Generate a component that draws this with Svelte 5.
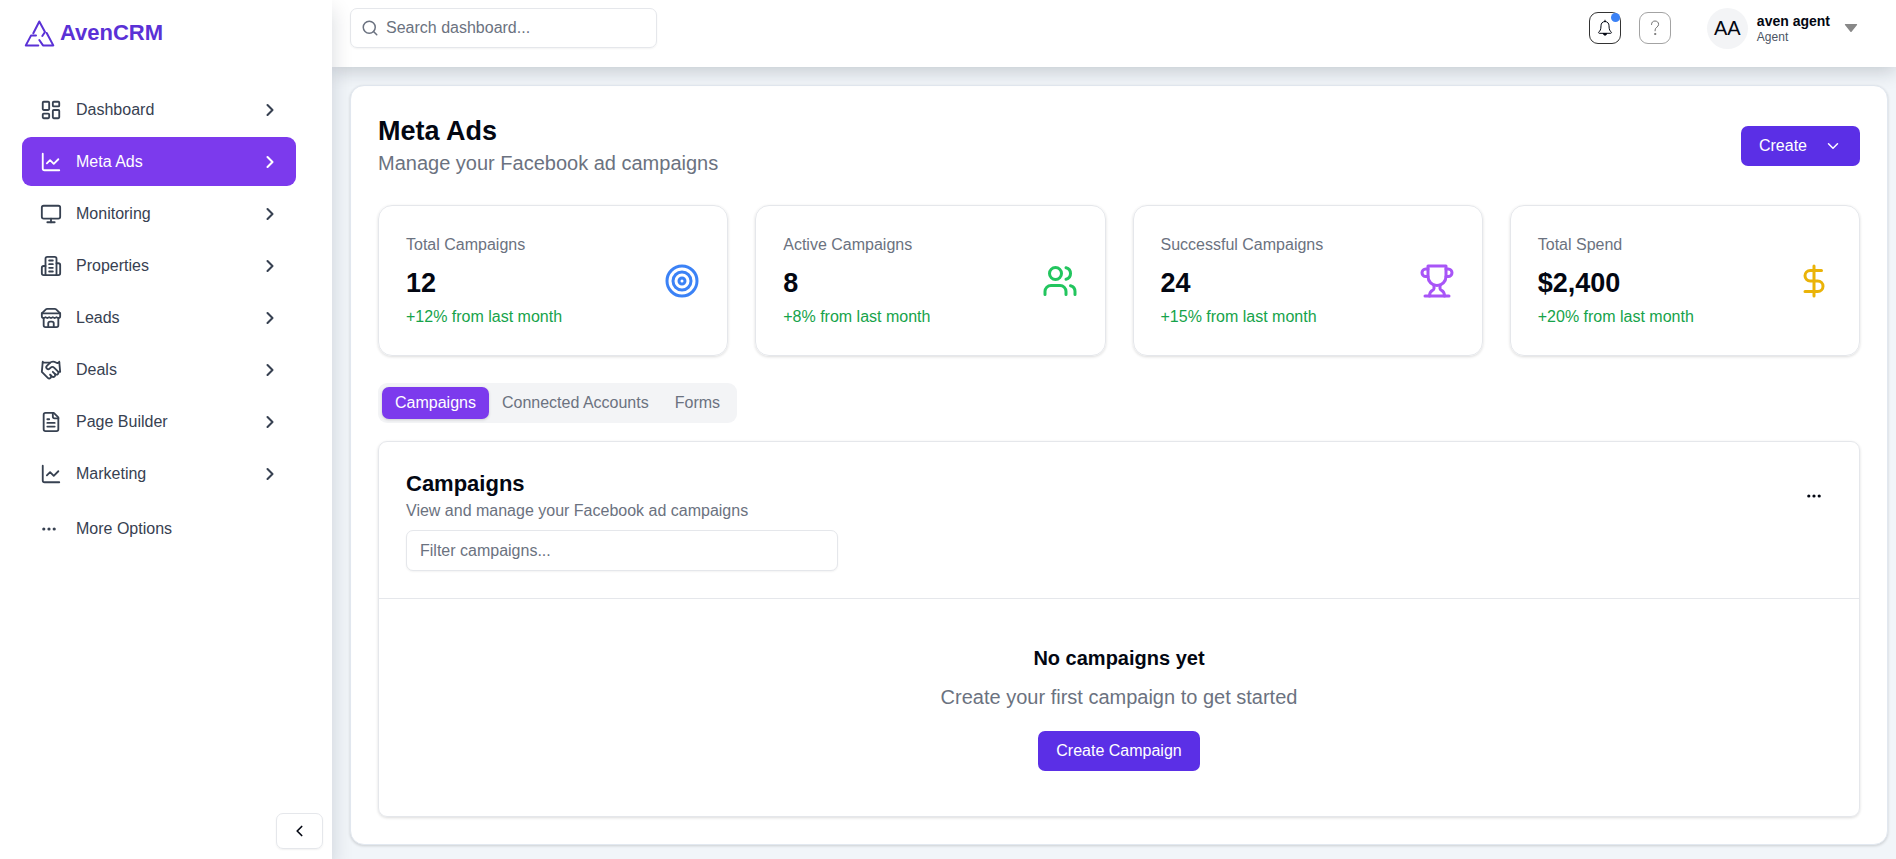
<script>
  const icons = {
    dashboard:
      '<rect width="7" height="9" x="3" y="3" rx="1"/><rect width="7" height="5" x="14" y="3" rx="1"/><rect width="7" height="9" x="14" y="12" rx="1"/><rect width="7" height="5" x="3" y="16" rx="1"/>',
    chart: '<path d="M3 3v16a2 2 0 0 0 2 2h16"/><path d="m7.5 13.5 3.5-3.5 4 4 5-5"/>',
    monitor:
      '<rect width="20" height="14" x="2" y="3" rx="2"/><path d="M8 21h8"/><path d="M12 17v4"/>',
    building:
      '<path d="M6 22V4a2 2 0 0 1 2-2h8a2 2 0 0 1 2 2v18Z"/><path d="M6 12H4a2 2 0 0 0-2 2v6a2 2 0 0 0 2 2h2"/><path d="M18 9h2a2 2 0 0 1 2 2v9a2 2 0 0 1-2 2h-2"/><path d="M10 6h4"/><path d="M10 10h4"/><path d="M10 14h4"/><path d="M10 18h4"/>',
    store:
      '<path d="m2 7 4.41-4.41A2 2 0 0 1 7.83 2h8.34a2 2 0 0 1 1.42.59L22 7"/><path d="M4 12v8a2 2 0 0 0 2 2h12a2 2 0 0 0 2-2v-8"/><path d="M15 22v-4a2 2 0 0 0-2-2h-2a2 2 0 0 0-2 2v4"/><path d="M2 7h20"/><path d="M22 7v3a2 2 0 0 1-2 2a2.7 2.7 0 0 1-1.59-.63.7.7 0 0 0-.82 0A2.7 2.7 0 0 1 16 12a2.7 2.7 0 0 1-1.59-.63.7.7 0 0 0-.82 0A2.7 2.7 0 0 1 12 12a2.7 2.7 0 0 1-1.59-.63.7.7 0 0 0-.82 0A2.7 2.7 0 0 1 8 12a2.7 2.7 0 0 1-1.59-.63.7.7 0 0 0-.82 0A2.7 2.7 0 0 1 4 12a2 2 0 0 1-2-2V7"/>',
    handshake:
      '<path d="m11 17 2 2a1 1 0 1 0 3-3"/><path d="m14 14 2.5 2.5a1 1 0 1 0 3-3l-3.88-3.88a3 3 0 0 0-4.24 0l-.88.88a1 1 0 1 1-3-3l2.81-2.81a5.79 5.79 0 0 1 7.06-.87l.47.28a2 2 0 0 0 1.42.25L21 4"/><path d="m21 3 1 11h-2"/><path d="M3 3 2 14l6.5 6.5a1 1 0 1 0 3-3"/><path d="M3 4h8"/>',
    file: '<path d="M15 2H6a2 2 0 0 0-2 2v16a2 2 0 0 0 2 2h12a2 2 0 0 0 2-2V7Z"/><path d="M14 2v4a2 2 0 0 0 2 2h4"/><path d="M10 9H8"/><path d="M16 13H8"/><path d="M16 17H8"/>',
    target:
      '<circle cx="12" cy="12" r="10"/><circle cx="12" cy="12" r="6"/><circle cx="12" cy="12" r="2"/>',
    users:
      '<path d="M16 21v-2a4 4 0 0 0-4-4H6a4 4 0 0 0-4 4v2"/><circle cx="9" cy="7" r="4"/><path d="M22 21v-2a4 4 0 0 0-3-3.87"/><path d="M16 3.13a4 4 0 0 1 0 7.75"/>',
    trophy:
      '<path d="M6 9H4.5a2.5 2.5 0 0 1 0-5H6"/><path d="M18 9h1.5a2.5 2.5 0 0 0 0-5H18"/><path d="M4 22h16"/><path d="M10 14.66V17c0 .55-.47.98-.97 1.21C7.85 18.75 7 20.24 7 22"/><path d="M14 14.66V17c0 .55.47.98.97 1.21C16.15 18.75 17 20.24 17 22"/><path d="M18 2H6v7a6 6 0 0 0 12 0V2Z"/>',
    dollar: '<path d="M12 2v20"/><path d="M17 5H9.5a3.5 3.5 0 0 0 0 7h5a3.5 3.5 0 0 1 0 7H6"/>',
  };

  const nav = [
    { label: 'Dashboard', icon: 'dashboard' },
    { label: 'Meta Ads', icon: 'chart', active: true },
    { label: 'Monitoring', icon: 'monitor' },
    { label: 'Properties', icon: 'building' },
    { label: 'Leads', icon: 'store' },
    { label: 'Deals', icon: 'handshake' },
    { label: 'Page Builder', icon: 'file' },
    { label: 'Marketing', icon: 'chart' },
  ];

  const stats = [
    { label: 'Total Campaigns', value: '12', change: '+12% from last month', icon: 'target', tone: 'blue' },
    { label: 'Active Campaigns', value: '8', change: '+8% from last month', icon: 'users', tone: 'green' },
    { label: 'Successful Campaigns', value: '24', change: '+15% from last month', icon: 'trophy', tone: 'purple' },
    { label: 'Total Spend', value: '$2,400', change: '+20% from last month', icon: 'dollar', tone: 'yellow' },
  ];

  const tabs = ['Campaigns', 'Connected Accounts', 'Forms'];
  let tab = $state('Campaigns');
</script>

{#snippet icon(name)}
  <svg class="icon" viewBox="0 0 24 24" aria-hidden="true">{@html icons[name]}</svg>
{/snippet}

{#snippet dots()}
  <svg class="dots" viewBox="0 0 16 16" aria-hidden="true">
    <circle cx="2.8" cy="8" r="1.6" /><circle cx="8" cy="8" r="1.6" /><circle cx="13.2" cy="8" r="1.6" />
  </svg>
{/snippet}

<div class="app">
  <aside>
    <a class="brand" href="#home">
      <svg viewBox="24 18 31 28" aria-hidden="true">
        <path d="M33.300 32.300 39.300 20.500 45 31 42.300 35" />
        <path d="M38.300 44.400H25.800L31 34.600H36" />
        <path d="M46.700 32 53.300 44.400H43L39.300 39" />
      </svg>
      AvenCRM
    </a>
    <nav>
      {#each nav as item}
        <a href="#{item.icon}" class:active={item.active} aria-current={item.active ? 'page' : undefined}>
          {@render icon(item.icon)}
          <span>{item.label}</span>
          <svg class="chevron" viewBox="0 0 24 24" aria-hidden="true"><path d="m9 18 6-6-6-6" /></svg>
        </a>
      {/each}
      <button class="more">{@render dots()}<span>More Options</span></button>
    </nav>
    <button class="collapse" aria-label="Collapse sidebar">
      <svg viewBox="0 0 16 16" aria-hidden="true"><path d="M9.500 4 5.500 8l4 4" /></svg>
    </button>
  </aside>

  <div class="page">
    <header>
      <label class="search">
        <svg viewBox="0 0 24 24" aria-hidden="true"><circle cx="11" cy="11" r="8" /><path d="m21 21-4.3-4.3" /></svg>
        <input type="text" placeholder="Search dashboard..." aria-label="Search dashboard" />
      </label>
      <div class="tools">
        <button class="square bell" aria-label="Notifications">
          <svg viewBox="0 0 18 18" aria-hidden="true">
            <path d="M9 1.2v1.3M9 2.5c-2.6 0-4 1.9-4 4.3 0 3.900-1 5.200-2.200 6.200-.5.5-.2 1.300.5 1.300h11.400c.7 0 1-.8.5-1.300C14 12 13 10.700 13 6.800c0-2.400-1.400-4.300-4-4.300Z" />
            <path class="solid" d="M7.400 14.500h3.200a1.600 1.700 0 0 1-3.200 0Z" />
          </svg>
          <i></i>
        </button>
        <button class="square help" aria-label="Help">
          <svg viewBox="0 0 18 18" aria-hidden="true">
            <path d="M5.500 5.500C5.500 3.200 7 2 9 2s3.600 1.300 3.600 3.300c0 2.900-3.500 2.900-3.500 5.700v.8" />
            <circle class="solid" cx="9.100" cy="15" r=".6" />
          </svg>
        </button>
        <button class="user">
          <span class="avatar">AA</span>
          <span class="who"><b>aven agent</b><small>Agent</small></span>
          <svg viewBox="0 0 14 10" aria-hidden="true"><path d="M1.500 1h11a.6.6 0 0 1 .5 1L7.600 8.700a.8.8 0 0 1-1.200 0L1 2a.6.6 0 0 1 .5-1Z" /></svg>
        </button>
      </div>
    </header>

    <main>
      <section class="panel">
        <div class="heading">
          <div>
            <h1>Meta Ads</h1>
            <p>Manage your Facebook ad campaigns</p>
          </div>
          <button class="primary create">
            Create
            <svg viewBox="0 0 24 24" aria-hidden="true"><path d="m6 9 6 6 6-6" /></svg>
          </button>
        </div>

        <div class="stats">
          {#each stats as s}
            <article class={s.tone}>
              <div>
                <p class="label">{s.label}</p>
                <p class="value">{s.value}</p>
                <p class="change">{s.change}</p>
              </div>
              {@render icon(s.icon)}
            </article>
          {/each}
        </div>

        <div class="tabs" role="tablist">
          {#each tabs as t}
            <button role="tab" aria-selected={tab === t} class:on={tab === t} onclick={() => (tab = t)}>{t}</button>
          {/each}
        </div>

        <section class="campaigns">
          <div class="top">
            <div class="intro">
              <h2>Campaigns</h2>
              <p>View and manage your Facebook ad campaigns</p>
              <input type="text" placeholder="Filter campaigns..." aria-label="Filter campaigns" />
            </div>
            <button class="menu" aria-label="Campaign options">{@render dots()}</button>
          </div>
          <div class="empty">
            <h3>No campaigns yet</h3>
            <p>Create your first campaign to get started</p>
            <button class="primary">Create Campaign</button>
          </div>
        </section>
      </section>
    </main>
  </div>
</div>

<style>
  :global(body) {
    margin: 0;
    background: #f1f5f9;
  }
  .app,
  .app * {
    box-sizing: border-box;
  }
  .app {
    display: flex;
    min-height: 100vh;
    font: 16px/22px 'Liberation Sans', Arial, sans-serif;
    color: #030712;
  }
  h1, h2, h3, p {
    margin: 0;
  }
  a {
    color: inherit;
    text-decoration: none;
  }
  button, input {
    font: inherit;
    color: inherit;
  }
  button {
    padding: 0;
    border: 0;
    background: none;
    cursor: pointer;
  }
  svg {
    flex: none;
    fill: none;
    stroke: currentColor;
    stroke-width: 2;
    stroke-linecap: round;
    stroke-linejoin: round;
  }
  .dots {
    width: 16px;
    height: 16px;
    fill: currentColor;
    stroke: none;
  }

  aside {
    position: relative;
    z-index: 2;
    flex: none;
    display: flex;
    flex-direction: column;
    width: 332px;
    padding: 18px 9px 10px 22px;
    background: #fff;
    box-shadow: 0 10px 20px rgba(15, 23, 42, 0.16);
  }
  .brand {
    display: flex;
    align-items: center;
    gap: 5px;
    height: 30px;
    padding-left: 2px;
    color: #5a31d6;
    font-size: 22px;
    font-weight: 700;
  }
  .brand svg {
    width: 31px;
    height: 28px;
  }
  nav {
    display: flex;
    flex-direction: column;
    gap: 3px;
    margin: 37px 27px 0 0;
    color: #374151;
  }
  nav a,
  .more {
    display: flex;
    align-items: center;
    gap: 14px;
    height: 49px;
    padding: 0 16px 0 18px;
    border-radius: 9px;
    text-align: left;
  }
  nav a span {
    flex: 1;
  }
  nav .icon {
    width: 22px;
    height: 22px;
  }
  nav .chevron {
    width: 20px;
    height: 20px;
    stroke-width: 2.5;
  }
  nav a.active {
    background: #7c3aed;
    color: #fff;
  }
  .more {
    gap: 19px;
    margin-top: 3px;
    padding-left: 19px;
  }
  .collapse {
    display: grid;
    place-items: center;
    align-self: flex-end;
    width: 47px;
    height: 36px;
    margin-top: auto;
    border: 1px solid #e5e7eb;
    border-radius: 7px;
    box-shadow: 0 1px 2px rgba(0, 0, 0, 0.06);
  }
  .collapse svg {
    width: 18px;
    height: 18px;
    stroke-width: 1.5;
  }

  .page {
    flex: 1;
    display: flex;
    flex-direction: column;
    min-width: 0;
  }
  header {
    position: relative;
    z-index: 1;
    display: flex;
    align-items: flex-start;
    justify-content: space-between;
    height: 67px;
    padding: 8px 38px 0 18px;
    background: #fff;
    box-shadow: 0 4px 18px rgba(15, 23, 42, 0.2);
  }
  .search {
    display: flex;
    align-items: center;
    gap: 7px;
    width: 307px;
    height: 40px;
    padding: 0 10px;
    border: 1px solid #e5e7eb;
    border-radius: 7px;
    color: #6b7280;
    box-shadow: 0 1px 2px rgba(0, 0, 0, 0.05);
  }
  .search svg {
    width: 18px;
    height: 18px;
  }
  .search input {
    flex: 1;
    min-width: 0;
    padding: 0;
    border: 0;
    outline: 0;
    background: none;
  }
  input::placeholder {
    color: #6b7280;
    opacity: 1;
  }
  .tools {
    display: flex;
    align-items: center;
    gap: 18px;
    height: 40px;
  }
  .square {
    position: relative;
    display: grid;
    place-items: center;
    width: 32px;
    height: 32px;
    border: 1px solid #333;
    border-radius: 9px;
  }
  .square svg {
    width: 18px;
    height: 18px;
    stroke-width: 1;
  }
  .solid {
    fill: currentColor;
  }
  .bell i {
    position: absolute;
    top: 0;
    right: 0;
    width: 9px;
    height: 9px;
    border-radius: 50%;
    background: #3b82f6;
  }
  .help {
    border-color: #a3a3a3;
    color: #737373;
  }
  .user {
    display: flex;
    align-items: center;
    gap: 9px;
    margin-left: 18px;
    text-align: left;
  }
  .avatar {
    display: grid;
    place-items: center;
    width: 41px;
    height: 41px;
    border-radius: 50%;
    background: #f3f4f6;
    font-size: 20px;
  }
  .who {
    display: grid;
  }
  .who b {
    font-size: 14px;
    line-height: 18px;
  }
  .who small {
    font-size: 12px;
    line-height: 14px;
    color: #4b5563;
  }
  .user svg {
    width: 14px;
    height: 10px;
    margin-left: 5px;
    fill: #888;
    stroke: none;
  }

  main {
    flex: 1;
    padding: 18px 8px 10px 18px;
  }
  .panel {
    display: flex;
    flex-direction: column;
    padding: 27px;
    border: 1px solid #e2e8f0;
    border-radius: 14px;
    background: #fff;
    box-shadow: 0 1px 3px rgba(0, 0, 0, 0.16);
  }
  .heading {
    display: flex;
    align-items: center;
    justify-content: space-between;
  }
  h1 {
    font-size: 27px;
    line-height: 36px;
  }
  .heading p {
    font-size: 20px;
    line-height: 29px;
    color: #6b7280;
  }
  .primary {
    height: 40px;
    padding: 0 18px;
    border-radius: 7px;
    background: #5b2fe6;
    color: #fff;
  }
  .create {
    display: flex;
    align-items: center;
    gap: 17px;
  }
  .create svg {
    width: 18px;
    height: 18px;
  }
  .stats {
    display: grid;
    grid-template-columns: repeat(4, 1fr);
    gap: 27px;
    margin-top: 27px;
  }
  article {
    display: flex;
    align-items: center;
    justify-content: space-between;
    padding: 27px;
    border: 1px solid #e5e7eb;
    border-radius: 14px;
    box-shadow: 0 1px 3px rgba(0, 0, 0, 0.14);
  }
  article .icon {
    width: 36px;
    height: 36px;
  }
  .label {
    line-height: 23px;
    color: #6b7280;
  }
  .value {
    margin: 9px 0 5px;
    font-size: 27px;
    line-height: 36px;
    font-weight: 700;
  }
  .change {
    color: #16a34a;
  }
  .blue .icon { color: #3b82f6; }
  .green .icon { color: #22c55e; }
  .purple .icon { color: #a855f7; }
  .yellow .icon { color: #eab308; }

  .tabs {
    display: flex;
    align-self: flex-start;
    margin-top: 27px;
    padding: 4px;
    border-radius: 9px;
    background: #f3f4f6;
  }
  .tabs button {
    height: 32px;
    padding: 0 13px;
    border-radius: 7px;
    color: #6b7280;
  }
  .tabs .on {
    background: #7c3aed;
    color: #fff;
    box-shadow: 0 1px 3px rgba(0, 0, 0, 0.16);
  }

  .campaigns {
    margin-top: 18px;
    border: 1px solid #e5e7eb;
    border-radius: 9px;
    box-shadow: 0 1px 3px rgba(0, 0, 0, 0.14);
  }
  .top {
    display: flex;
    justify-content: space-between;
    padding: 27px;
    border-bottom: 1px solid #e5e7eb;
  }
  .intro {
    flex: 0 1 432px;
  }
  h2 {
    font-size: 22px;
    line-height: 30px;
  }
  .intro p {
    margin-bottom: 8px;
    line-height: 23px;
    color: #6b7280;
  }
  .intro input {
    display: block;
    width: 100%;
    height: 41px;
    padding: 0 13px;
    border: 1px solid #e5e7eb;
    border-radius: 7px;
    outline: 0;
    background: #fff;
    box-shadow: 0 1px 2px rgba(0, 0, 0, 0.05);
  }
  .menu {
    display: grid;
    place-items: center;
    width: 36px;
    height: 36px;
    margin-top: 9px;
  }
  .empty {
    display: flex;
    flex-direction: column;
    align-items: center;
    padding: 45px 27px;
  }
  h3 {
    font-size: 20px;
    line-height: 28px;
  }
  .empty p {
    margin: 9px 0 18px;
    font-size: 20px;
    line-height: 32px;
    color: #6b7280;
  }
</style>
